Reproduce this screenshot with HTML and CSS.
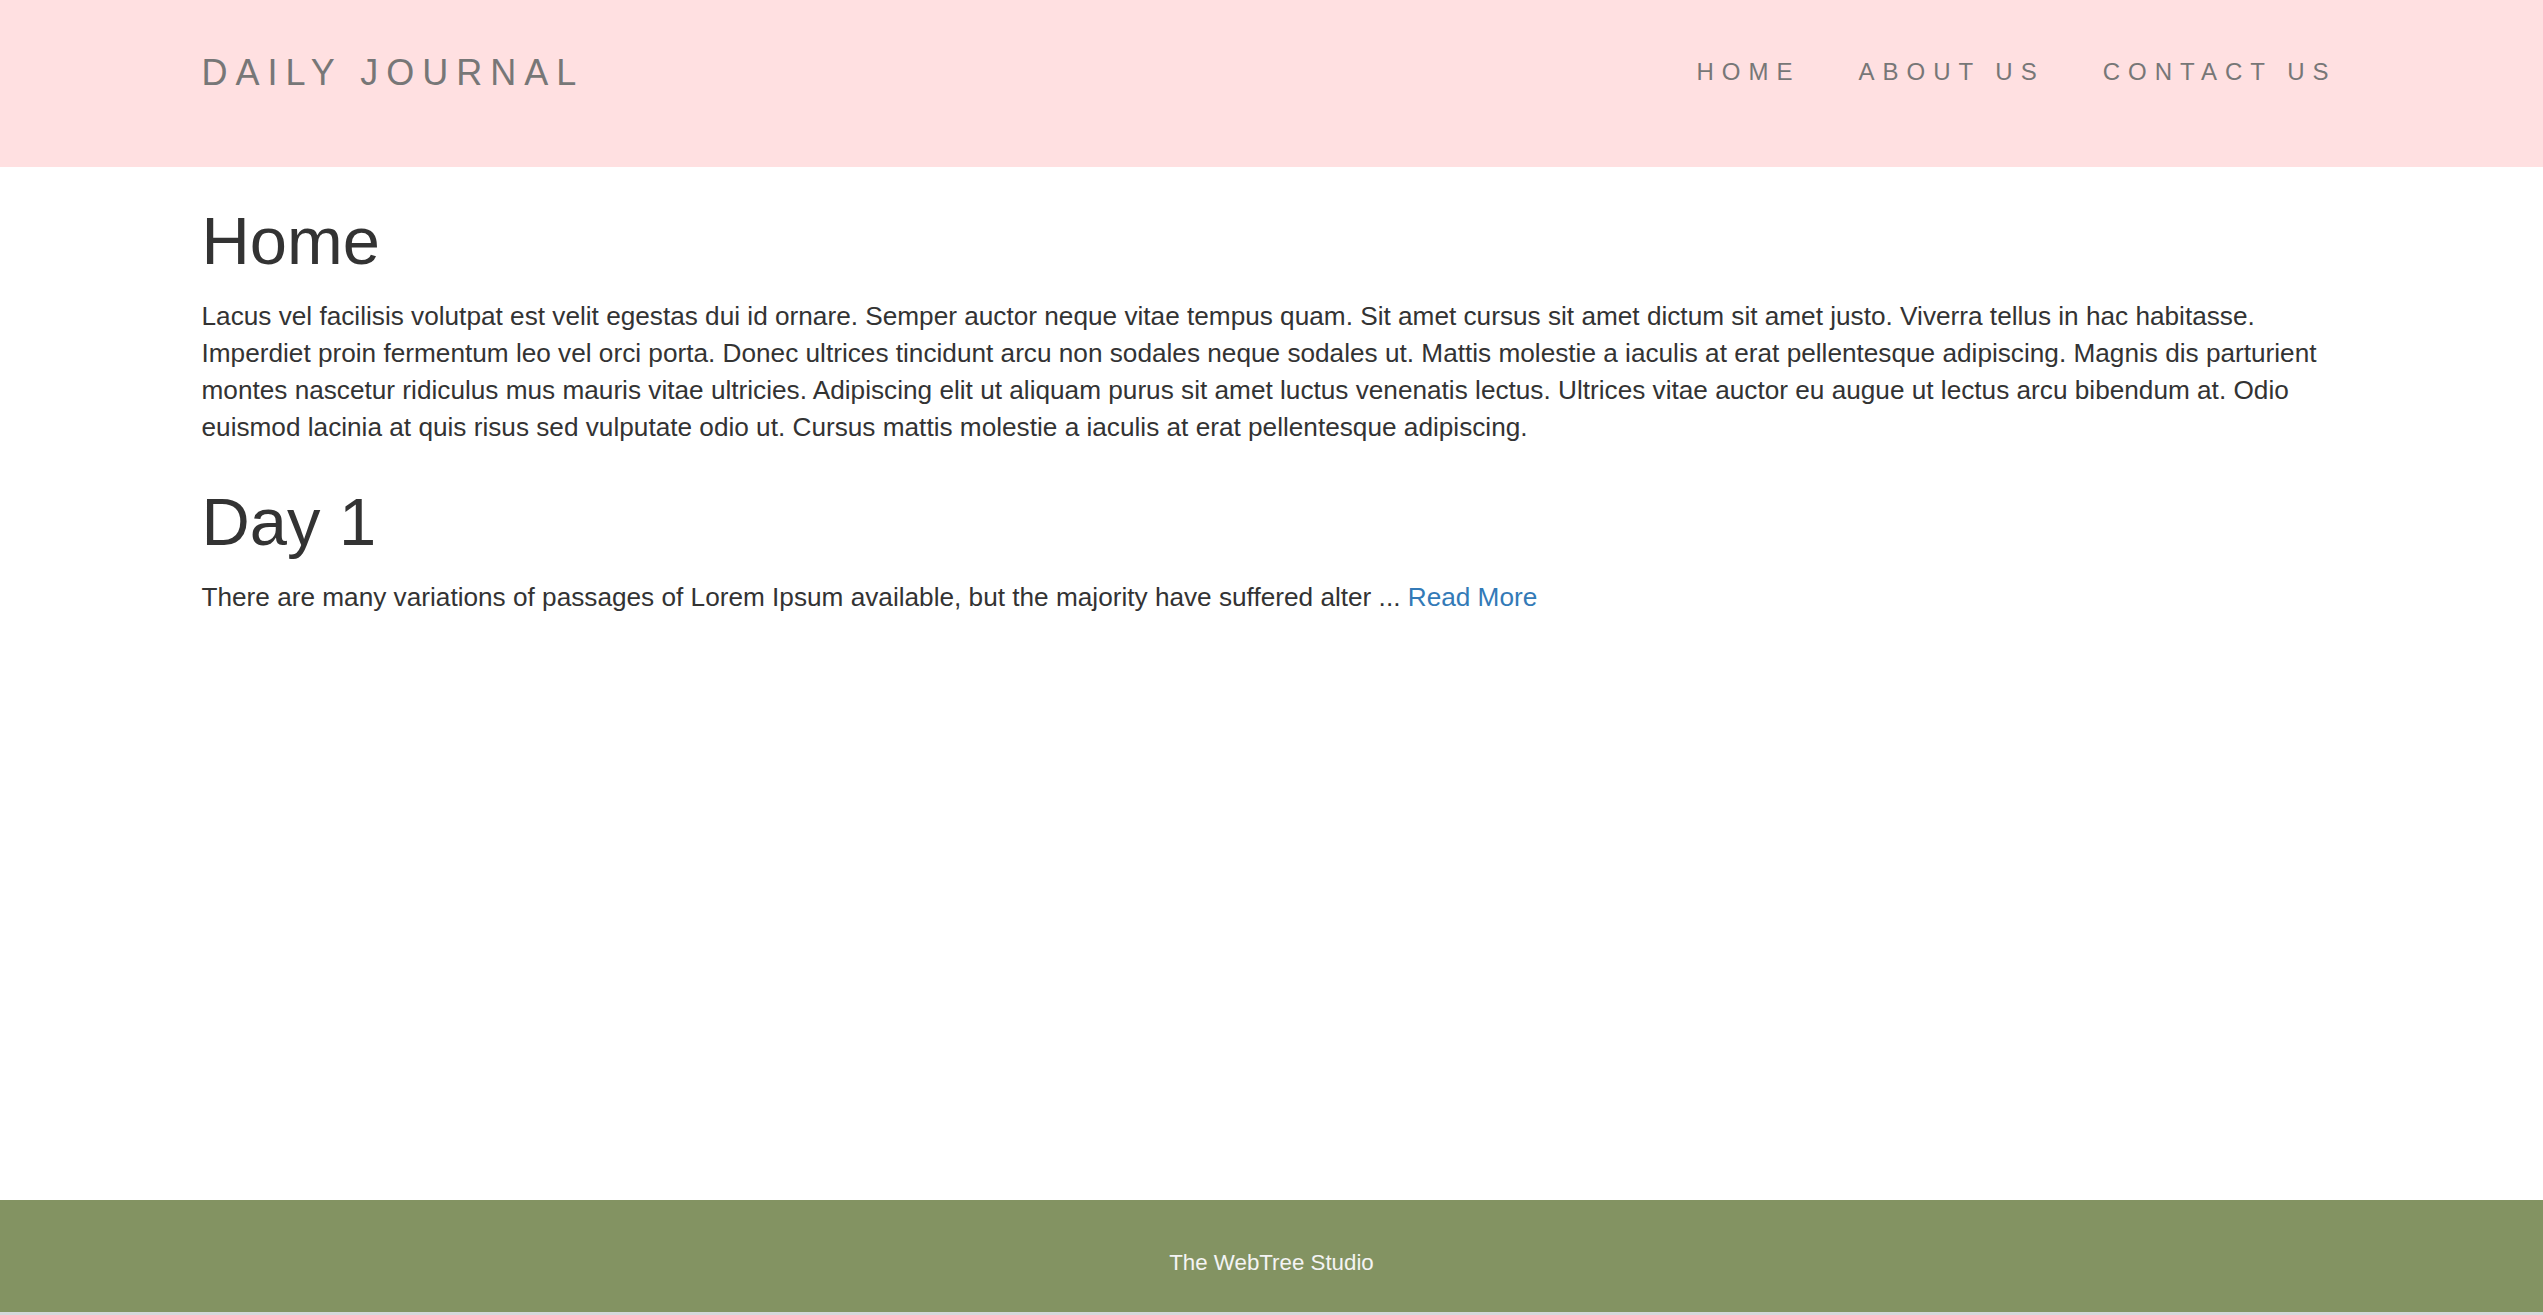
FILE: index.html
```html
<!DOCTYPE html>
<html lang="en">
<head>
<meta charset="utf-8">
<title>Daily Journal</title>
<link rel="stylesheet" href="styles.css">
</head>
<body>
<div class="page">
  <header class="site-header">
    <div class="container header-inner">
      <a class="brand" href="#">DAILY JOURNAL</a>
      <nav class="nav">
        <a href="#">HOME</a>
        <a href="#">ABOUT US</a>
        <a href="#">CONTACT US</a>
      </nav>
    </div>
  </header>
  <main class="main">
    <div class="container">
      <h1 class="first-title">Home</h1>
      <p>Lacus vel facilisis volutpat est velit egestas dui id ornare. Semper auctor neque vitae tempus quam. Sit amet cursus sit amet dictum sit amet justo. Viverra tellus in hac habitasse. Imperdiet proin fermentum leo vel orci porta. Donec ultrices tincidunt arcu non sodales neque sodales ut. Mattis molestie a iaculis at erat pellentesque adipiscing. Magnis dis parturient montes nascetur ridiculus mus mauris vitae ultricies. Adipiscing elit ut aliquam purus sit amet luctus venenatis lectus. Ultrices vitae auctor eu augue ut lectus arcu bibendum at. Odio euismod lacinia at quis risus sed vulputate odio ut. Cursus mattis molestie a iaculis at erat pellentesque adipiscing.</p>
      <h1>Day 1</h1>
      <p>There are many variations of passages of Lorem Ipsum available, but the majority have suffered alter ... <a class="read-more" href="#">Read More</a></p>
    </div>
  </main>
  <footer class="site-footer">
    <p>The WebTree Studio</p>
  </footer>
</div>
</body>
</html>
```

FILE: styles.css
```css
html {
  background: #d6d8dc;
}
body {
  margin: 0;
  background: #ffffff;
  font-family: "Liberation Sans", Arial, sans-serif;
  font-size: 26.2px;
  line-height: 37.14px;
  color: #333333;
}
.page {
  display: flex;
  flex-direction: column;
  min-height: 1312px;
}
.container {
  width: 2140px;
  margin: 0 auto;
}
.site-header {
  background: #ffe0e1;
  height: 167px;
}
.header-inner {
  display: flex;
  justify-content: space-between;
  align-items: center;
  height: 144px;
}
.brand {
  font-size: 36px;
  line-height: 40px;
  padding-top: 1px;
  letter-spacing: 8px;
  color: #777777;
  text-decoration: none;
}
.nav {
  display: flex;
  gap: 58px;
  margin-right: 5px;
}
.nav a {
  font-size: 24px;
  line-height: 30px;
  letter-spacing: 8px;
  color: #777777;
  text-decoration: none;
}
.main {
  flex: 1;
}
h1 {
  font-size: 66.86px;
  font-weight: 500;
  line-height: 73.5px;
  margin: 38.8px 0 20.2px;
}
.first-title {
  margin-top: 37.14px;
}
p {
  margin: 0 0 18.57px;
}
.read-more {
  color: #337ab7;
  text-decoration: none;
}
.site-footer {
  background: #839362;
  height: 112px;
  box-sizing: border-box;
  padding-top: 47px;
  text-align: center;
}
.site-footer p {
  margin: 0;
  color: #f4f4f4;
  font-size: 22.3px;
  line-height: 31.8px;
}
```
